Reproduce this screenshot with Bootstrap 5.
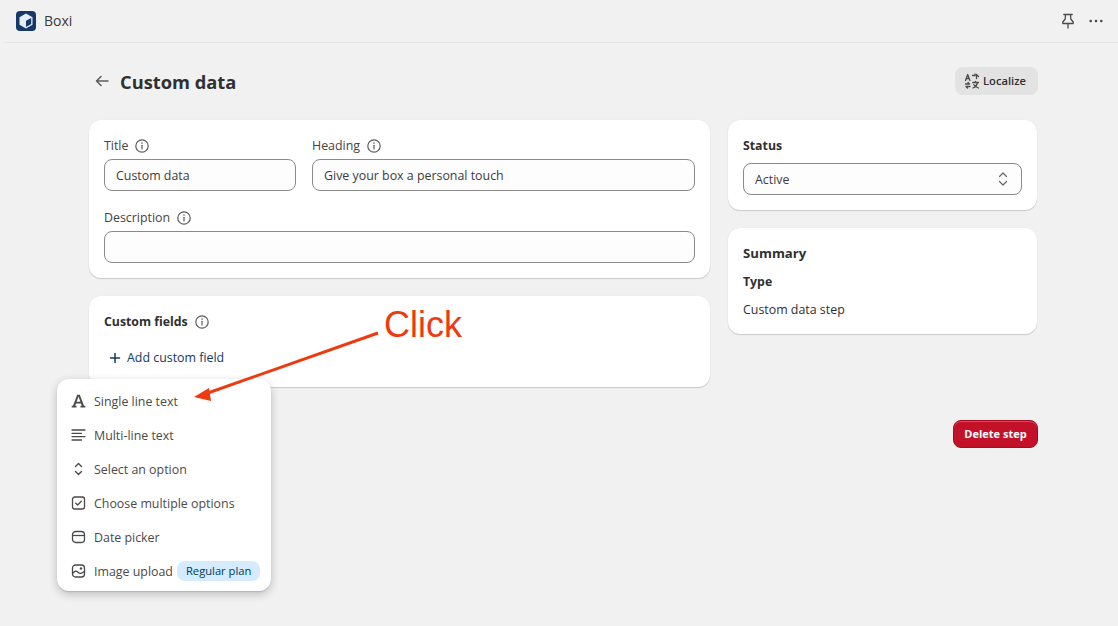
<!DOCTYPE html>
<html lang="en">
<head>
<meta charset="utf-8">
<title>Boxi</title>
<link rel="stylesheet" href="https://cdn.jsdelivr.net/npm/bootstrap@5.3.0/dist/css/bootstrap.min.css">
<style>
html,body{height:100%}
body{background:#f1f1f1;font-family:"Open Sans","Noto Sans","Liberation Sans",sans-serif;font-size:12.4px;color:#303030;overflow:hidden;position:relative;line-height:20px}
.topstrip{height:43px;border-bottom:1px solid #e6e6e6;margin-left:4px;padding:0 14px 0 12px}
.topicons{gap:12px}
.logo-tile{width:20px;height:20px;background:#17386b;border-radius:4px}
.app-name{font-size:14px;color:#3a3a3a}
.pagewrap{width:950px;margin:24px 0 0 88px}
.pagehead{height:28px;margin-bottom:25px}
.pagehead h1{font-size:18.3px;font-weight:700;line-height:28px;margin:2px 0 0;color:#303030}
.back-ic{margin:0 10px 0 6px}
.loc-btn{height:28px;width:83px;background:#e3e3e3;border:0;border-radius:8px;font-size:11.2px;font-weight:600;color:#303030;padding:0 0 0 9px}
.loc-gap{gap:3px}
.layoutgrid{display:grid;grid-template-columns:621px 309px;column-gap:18px;margin-left:1px}
.panel{background:#fff;border-radius:12px;box-shadow:0 1px 1px rgba(0,0,0,.16),0 0 1px rgba(0,0,0,.1);padding:15px;margin-bottom:18px;border:0}
.panel-fields{padding-bottom:17px}
.panel-summary{padding-bottom:14px}
.fieldlabel{font-size:12.4px;color:#444;line-height:20px;padding-top:1px;margin-bottom:3px;gap:6px}
.fieldbox.form-control,.fieldbox.form-select{height:32px;border:1px solid #8a8a8a;border-radius:8px;background-color:#fdfdfd;font-size:12.4px;color:#3c3c3c;padding:0 11px;line-height:30px;box-shadow:none}
.fieldbox.form-select{padding-top:1px;background-image:url("data:image/svg+xml,%3Csvg xmlns='http://www.w3.org/2000/svg' viewBox='0 0 12 18'%3E%3Cpath d='M2.500 6.500 6 3l3.500 3.500M2.500 11.500 6 15l3.500-3.500' fill='none' stroke='%23666' stroke-width='1.200' stroke-linecap='round' stroke-linejoin='round'/%3E%3C/svg%3E");background-size:12px 18px;background-position:right 12px center}
.w-title{width:192px}
.fieldrow{gap:16px;margin-bottom:16px}
.strong-label{font-weight:700;color:#303030;font-size:12.3px;gap:6px;padding-top:1px}
.status-label{margin-bottom:7px}
.strong-big{font-size:13.2px;padding-top:0}
.addlink{color:#12395f;font-size:12.4px;text-decoration:none;margin-left:5px;gap:6px}
.delrow{margin-top:15px}
.del-btn{background:#c4112a;border:1px solid #a30c20;box-shadow:inset 0 1px 0 rgba(255,255,255,.25);color:#fff;font-size:11px;font-weight:700;height:28px;width:85px;border-radius:8px;padding:0}
.popmenu{position:absolute;left:57px;top:379px;width:214px;height:212px;background:#fff;border-radius:12px;box-shadow:0 1px 1px rgba(0,0,0,.12),0 3px 10px rgba(0,0,0,.22);padding:5px 11px 5px 14px}
.menurow{height:34px;gap:8px;color:#4a4a4a;font-size:12.4px;white-space:nowrap}
.menurow svg{flex:none}
.menutext{padding-top:2px}
.planchip{background:#d5ebff;color:#003a5a;font-size:11.200px;border-radius:8px;height:20px;line-height:20px;padding:0 9px;margin-left:-4px;white-space:nowrap}
.click-note{position:absolute;left:384px;top:301px;font-family:"Liberation Sans",Arial,sans-serif;font-size:36px;line-height:48px;color:#ee3a10}
.arrow-note{position:absolute;left:185px;top:325px}
.ic{color:#5c5c5c}
</style>
</head>
<body>
<header class="topstrip d-flex align-items-center">
  <span class="logo-tile d-flex align-items-center justify-content-center me-2">
    <svg width="20" height="20" viewBox="0 0 20 20"><path d="M10 2.500 16.500 6.200V13.800L10 17.500 3.500 13.800V6.200Z" fill="#e6edf6"/><path d="M10 9.800 15.200 6.900V13L10 16Z" fill="#17386b"/></svg>
  </span>
  <span class="app-name">Boxi</span>
  <span class="ms-auto d-flex align-items-center topicons">
    <svg width="16" height="16" viewBox="0 0 16 16" fill="none" stroke="#4a4a4a" stroke-width="1.300" stroke-linejoin="round" stroke-linecap="round"><path d="M3.800 1.500h8.400M5.500 1.500l-.3 4.500-2.400 3v1.500h10.400V9l-2.400-3-.3-4.500M8 10.500v4.500"/></svg>
    <svg width="16" height="16" viewBox="0 0 16 16" fill="#4a4a4a"><circle cx="2.700" cy="8" r="1.300"/><circle cx="8" cy="8" r="1.300"/><circle cx="13.300" cy="8" r="1.300"/></svg>
  </span>
</header>
<main class="pagewrap">
  <div class="pagehead d-flex align-items-center">
    <svg class="back-ic" width="16" height="16" viewBox="0 0 16 16" fill="none" stroke="#5c5c5c" stroke-width="1.500" stroke-linecap="round" stroke-linejoin="round"><path d="M14 8H2.500M7 3.500 2.500 8 7 12.500"/></svg>
    <h1>Custom data</h1>
    <button type="button" class="btn loc-btn ms-auto d-flex align-items-center loc-gap">
      <svg width="16" height="16" viewBox="0 0 16 16" fill="none" stroke="#4a4a4a" stroke-width="1.300" stroke-linecap="round" stroke-linejoin="round"><path d="M1.500 7.500 3.700 1.500l2.200 6M2.300 5.500h2.800M8.500 2.500h2.500V1M11 2.500h-1.500M12.500 5.500V1.500L14.500 3.500M1.500 11h4l-1.500-1.500M6 13.500H2L3.500 15M8.800 9.500h5.700M11.600 8.500v1M13.500 9.500c-.5 2.500-2 4.500-4.500 5.500M9.800 11.500c.8 1.500 2.400 2.800 4.700 3.500"/></svg>
      Localize
    </button>
  </div>
  <div class="layoutgrid">
    <div>
      <section class="panel">
        <div class="d-flex fieldrow">
          <div class="w-title">
            <div class="fieldlabel d-flex align-items-center">Title <svg class="ic" width="16" height="16" viewBox="0 0 16 16" fill="none" stroke="currentColor" stroke-width="1.200"><circle cx="8" cy="8" r="6.200"/><path d="M8 7.300v3.700" stroke-linecap="round"/><circle cx="8" cy="5" r=".8" fill="currentColor" stroke="none"/></svg></div>
            <input class="form-control fieldbox" value="Custom data">
          </div>
          <div class="flex-grow-1">
            <div class="fieldlabel d-flex align-items-center">Heading <svg class="ic" width="16" height="16" viewBox="0 0 16 16" fill="none" stroke="currentColor" stroke-width="1.200"><circle cx="8" cy="8" r="6.200"/><path d="M8 7.300v3.700" stroke-linecap="round"/><circle cx="8" cy="5" r=".8" fill="currentColor" stroke="none"/></svg></div>
            <input class="form-control fieldbox" value="Give your box a personal touch">
          </div>
        </div>
        <div class="fieldlabel d-flex align-items-center">Description <svg class="ic" width="16" height="16" viewBox="0 0 16 16" fill="none" stroke="currentColor" stroke-width="1.200"><circle cx="8" cy="8" r="6.200"/><path d="M8 7.300v3.700" stroke-linecap="round"/><circle cx="8" cy="5" r=".8" fill="currentColor" stroke="none"/></svg></div>
        <input class="form-control fieldbox" value="">
      </section>
      <section class="panel panel-fields">
        <div class="strong-label d-flex align-items-center mb-3">Custom fields <svg class="ic" width="16" height="16" viewBox="0 0 16 16" fill="none" stroke="currentColor" stroke-width="1.200"><circle cx="8" cy="8" r="6.200"/><path d="M8 7.300v3.700" stroke-linecap="round"/><circle cx="8" cy="5" r=".8" fill="currentColor" stroke="none"/></svg></div>
        <a href="#" class="addlink d-inline-flex align-items-center"><svg width="12" height="12" viewBox="0 0 12 12" stroke="#12395f" stroke-width="1.500" stroke-linecap="round"><path d="M6 1.500v9M1.500 6h9"/></svg>Add custom field</a>
      </section>
    </div>
    <div>
      <section class="panel">
        <div class="strong-label status-label">Status</div>
        <select class="form-select fieldbox"><option>Active</option></select>
      </section>
      <section class="panel panel-summary">
        <div class="strong-label strong-big">Summary</div>
        <div class="strong-label mt-2">Type</div>
        <div class="mt-2">Custom data step</div>
      </section>
    </div>
  </div>
  <div class="d-flex justify-content-end delrow">
    <button type="button" class="btn del-btn">Delete step</button>
  </div>
</main>

<nav class="popmenu">
  <div class="menurow d-flex align-items-center">
    <svg width="15" height="16" viewBox="0 0 15 16" fill="#4a4a4a"><path d="M6.200 1.800h2.600L13 12.800h1.300V14.500H9.500v-1.700h1.300l-.8-2.400H5l-.8 2.400h1.300v1.700H.7v-1.700H2zM5.600 8.800h3.800L7.500 3.500z"/></svg>
    <span class="menutext">Single line text</span>
  </div>
  <div class="menurow d-flex align-items-center">
    <svg width="15" height="16" viewBox="0 0 15 16" stroke="#4a4a4a" stroke-width="1.300" stroke-linecap="round"><path d="M1 3h13M1 6.300h9.500M1 9.600h13M1 13h9.500"/></svg>
    <span class="menutext">Multi-line text</span>
  </div>
  <div class="menurow d-flex align-items-center">
    <svg width="15" height="16" viewBox="0 0 15 16" fill="none" stroke="#4a4a4a" stroke-width="1.400" stroke-linecap="round" stroke-linejoin="round"><path d="M4.500 5.500 7.500 2.500l3 3M4.500 10.500l3 3 3-3"/></svg>
    <span class="menutext">Select an option</span>
  </div>
  <div class="menurow d-flex align-items-center">
    <svg width="15" height="16" viewBox="0 0 15 16" fill="none" stroke="#4a4a4a" stroke-width="1.300" stroke-linecap="round" stroke-linejoin="round"><rect x="1.500" y="2" width="12" height="12" rx="2.200"/><path d="M4.700 8.200 6.700 10l3.600-3.800"/></svg>
    <span class="menutext">Choose multiple options</span>
  </div>
  <div class="menurow d-flex align-items-center">
    <svg width="15" height="16" viewBox="0 0 15 16" fill="none" stroke="#4a4a4a" stroke-width="1.300"><rect x="1.500" y="2.500" width="12" height="11" rx="3.200"/><path d="M1.500 6.500h12"/></svg>
    <span class="menutext">Date picker</span>
  </div>
  <div class="menurow d-flex align-items-center">
    <svg width="15" height="16" viewBox="0 0 15 16" fill="none" stroke="#4a4a4a" stroke-width="1.300" stroke-linejoin="round"><rect x="1.500" y="2" width="12" height="12" rx="3"/><path d="M1.700 10.500c2-3 3.600-3 5.300-1.300 1.500 1.600 3 2 6.300-.7"/><circle cx="10" cy="5.500" r="1.200" fill="#4a4a4a" stroke="none"/></svg>
    <span class="menutext">Image upload</span>
    <span class="planchip">Regular plan</span>
  </div>
</nav>

<div class="click-note">Click</div>
<svg class="arrow-note" width="200" height="85" viewBox="185 325 200 85">
  <path d="M378 333 205 394" stroke="#ee3a10" stroke-width="3" fill="none"/>
  <path d="M194 397 209 388 211 401Z" fill="#ee3a10"/>
</svg>
<script src="https://cdn.jsdelivr.net/npm/bootstrap@5.3.0/dist/js/bootstrap.bundle.min.js"></script>
</body>
</html>
